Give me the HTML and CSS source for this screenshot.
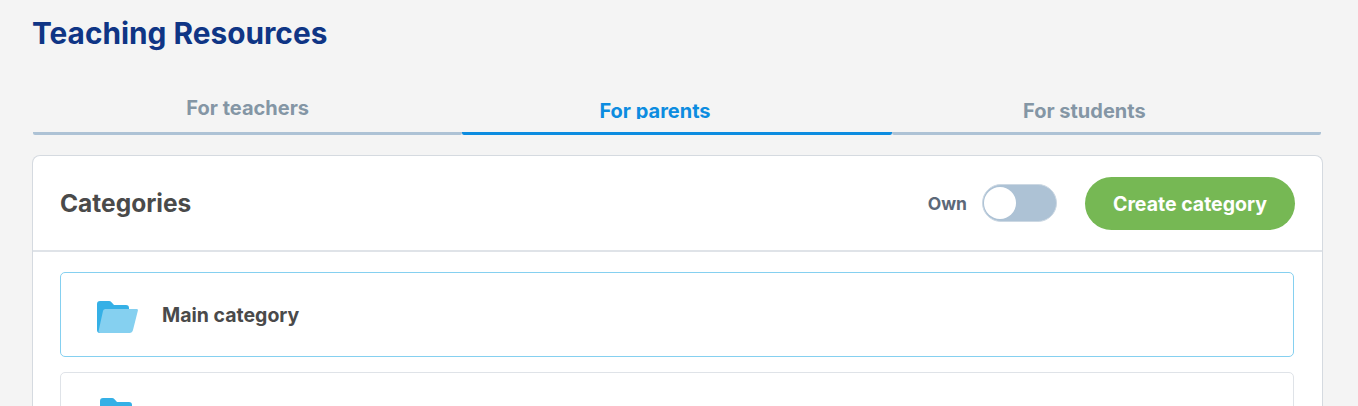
FILE: index.html
```html
<!DOCTYPE html>
<html lang="en">
<head>
    <meta charset="UTF-8">
    <title>Teaching Resources</title>
    <link rel="stylesheet" href="styles.css">
</head>
<body>
    <h1 class="page-title">Teaching Resources</h1>
    <div class="tabs">
        <div class="tab tab-raised"><span class="tab-label">For teachers</span></div>
        <div class="tab tab-active"><span class="tab-label">For parents</span></div>
        <div class="tab"><span class="tab-label">For students</span></div>
    </div>
    <div class="card">
        <div class="card-header">
            <h2 class="card-title">Categories</h2>
            <span class="own-label">Own</span>
            <span class="toggle"><span class="toggle-knob"></span></span>
            <button class="btn-create">Create category</button>
        </div>
        <div class="card-body">
            <div class="category category-active">
                <svg class="folder" viewBox="0 0 41 32"><path fill="#35b0e6" d="M3 0h9c1 0 1.800.4 2.500 1.200L17 4H29c2 0 3 1 3 3v20H4v5H3c-2 0-3-1-3-3V3c0-2 1-3 3-3z"/><path fill="#85d0f0" d="M8.500 8H39.500c1 0 1.600.6 1.400 1.500L36 29c-.5 2-1.700 3-3.500 3H3.500C2 32 1.300 31 1.700 29.500L6 10c.3-1.200 1.200-2 2.500-2z"/></svg>
                <span class="category-name">Main category</span>
            </div>
            <div class="category category-next">
                <svg class="folder" viewBox="0 0 41 32"><path fill="#35b0e6" d="M3 0h9c1 0 1.800.4 2.500 1.200L17 4H29c2 0 3 1 3 3v20H4v5H3c-2 0-3-1-3-3V3c0-2 1-3 3-3z"/><path fill="#85d0f0" d="M8.500 8H39.500c1 0 1.600.6 1.400 1.500L36 29c-.5 2-1.700 3-3.500 3H3.500C2 32 1.300 31 1.700 29.500L6 10c.3-1.200 1.200-2 2.500-2z"/></svg>
            </div>
        </div>
    </div>
</body>
</html>
```

FILE: styles.css
```css
html, body {
    height: 406px;
    overflow: hidden;
}
body {
    margin: 0;
    padding: 0 35px 0 32px;
    font-family: Inter, "Open Sans", sans-serif;
    background-color: #f4f4f4;
}
.page-title {
    margin: 0;
    padding: 15px 0 0 1px;
    height: 45px;
    font-size: 29.8px;
    line-height: 36px;
    font-weight: 700;
    color: #0f3585;
    text-indent: -1px;
}
.tabs {
    display: flex;
    height: 75px;
    margin-left: 1px;
    margin-right: 2px;
}
.tab {
    flex: 1;
    display: flex;
    justify-content: center;
    align-items: flex-end;
    border-bottom: 3px solid #adc2d5;
    border-radius: 2px;
    font-size: 20px;
    font-weight: 700;
    color: #8496a5;
}
.tab-label {
    height: 20px;
    margin-right: 44px;
    margin-bottom: 13px;
    line-height: 24px;
    overflow: hidden;
}
.tab-raised .tab-label {
    height: 24px;
    margin-right: 0;
    margin-bottom: 12px;
}
.tab-active {
    border-bottom-color: #0c8ce0;
    color: #0c8ce0;
}
.card {
    margin-top: 20px;
    background-color: #fff;
    border: 1px solid #d5dae0;
    border-bottom: none;
    border-radius: 8px 8px 0 0;
    height: 300px;
}
.card-header {
    display: flex;
    align-items: center;
    height: 94px;
    padding: 0 27px;
    border-bottom: 2px solid #dfe3e8;
}
.card-title {
    margin: 0;
    flex: 1;
    font-size: 24.5px;
    font-weight: 700;
    color: #4a4a4a;
}
.own-label {
    margin-right: 15px;
    font-size: 17.5px;
    font-weight: 700;
    color: #5c6878;
}
.toggle {
    display: flex;
    align-items: center;
    width: 75px;
    height: 38px;
    padding: 1px;
    box-sizing: border-box;
    border-radius: 19px;
    background-color: #adc2d5;
    border: 1px solid #ccd8e3;
}
.toggle-knob {
    width: 32px;
    height: 32px;
    border-radius: 50%;
    background-color: #fff;
}
.btn-create {
    margin-top: 1px;
    margin-left: 28px;
    width: 210px;
    height: 53px;
    border: none;
    border-radius: 27px;
    background-color: #76b854;
    color: #fff;
    font-family: inherit;
    font-size: 19.5px;
    font-weight: 700;
}
.card-body {
    padding: 20px 28px 0 27px;
}
.category {
    display: flex;
    align-items: center;
    height: 85px;
    box-sizing: border-box;
    margin-bottom: 15px;
    padding-left: 36px;
    background-color: #fff;
    border: 1px solid #dfe3e8;
    border-radius: 5px;
}
.category-active {
    border-color: #85d0f0;
}
.category-next {
    padding-left: 39px;
}
.folder {
    width: 41px;
    height: 32px;
    margin-top: 5px;
    flex-shrink: 0;
}
.category-next .folder {
    margin-top: -1px;
}
.category-name {
    margin-top: 1px;
    margin-left: 24px;
    font-size: 19.5px;
    font-weight: 700;
    color: #4a4a4a;
}
```
